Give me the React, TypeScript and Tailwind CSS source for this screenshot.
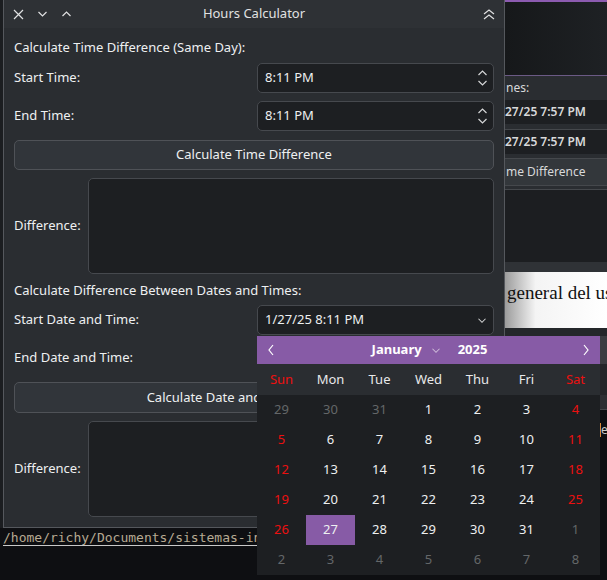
const font = "font-['Noto_Sans',sans-serif]";

const weekDays = ["Sun", "Mon", "Tue", "Wed", "Thu", "Fri", "Sat"];

const weeks = [
  [29, 30, 31, 1, 2, 3, 4],
  [5, 6, 7, 8, 9, 10, 11],
  [12, 13, 14, 15, 16, 17, 18],
  [19, 20, 21, 22, 23, 24, 25],
  [26, 27, 28, 29, 30, 31, 1],
  [2, 3, 4, 5, 6, 7, 8],
];

function isOutside(row: number, day: number) {
  return (row === 0 && day > 20) || (row >= 4 && day < 10);
}

function Chevron({ dir, className }: { dir: "up" | "down" | "left" | "right"; className?: string }) {
  const d = {
    up: "M1 6 L5 2 L9 6",
    down: "M1 2 L5 6 L9 2",
    left: "M6 1 L2 6 L6 11",
    right: "M2 1 L6 6 L2 11",
  }[dir];
  const box = dir === "up" || dir === "down" ? "0 0 10 8" : "0 0 8 12";
  return (
    <svg viewBox={box} className={className} fill="none" stroke="currentColor" strokeWidth="1.2">
      <path d={d} />
    </svg>
  );
}

function SpinInput({ value }: { value: string }) {
  return (
    <div className="flex h-[30px] w-[237px] items-center justify-between rounded-[5px] border border-[#46494e] bg-[#1d1f22] pl-[7px] pr-[5px] text-[#eef0f1]">
      <span>{value}</span>
      <div className="flex flex-col gap-[2px] text-[#d5d6d7]">
        <Chevron dir="up" className="h-[8px] w-[11px]" />
        <Chevron dir="down" className="h-[8px] w-[11px]" />
      </div>
    </div>
  );
}

function ComboInput({ value }: { value: string }) {
  return (
    <div className="flex h-[30px] w-[237px] items-center justify-between rounded-[5px] border border-[#46494e] bg-[#1d1f22] pl-[7px] pr-[6px] text-[#eef0f1]">
      <span>{value}</span>
      <Chevron dir="down" className="h-[7px] w-[10px] text-[#d5d6d7]" />
    </div>
  );
}

function Button({ label, tall }: { label: string; tall?: boolean }) {
  return (
    <div
      className={`flex items-center justify-center rounded-[5px] border border-[#4f5257] bg-[#31353a] text-[#eef0f1] ${tall ? "h-[31px]" : "h-[30px]"}`}
    >
      {label}
    </div>
  );
}

function Row({ label, children }: { label: string; children: React.ReactNode }) {
  return (
    <div className="flex items-center justify-between">
      <span>{label}</span>
      {children}
    </div>
  );
}

function DiffRow() {
  return (
    <div className="flex items-center">
      <span className="w-[74px]">Difference:</span>
      <div className="h-[96px] flex-1 rounded-[5px] border border-[#46494e] bg-[#1d1f22]" />
    </div>
  );
}

function Calendar() {
  return (
    <div className={`absolute left-[257px] top-[336px] w-[343px] bg-[#1d1f22] text-[13px] ${font}`}>
      <div className="flex h-[28px] items-center justify-between bg-[#875ba6] px-[10px] text-white">
        <Chevron dir="left" className="h-[12px] w-[8px]" />
        <div className="flex items-center gap-[9px] pl-[2px] font-bold">
          <span>January</span>
          <Chevron dir="down" className="h-[7px] w-[10px] text-[#cdbad9]" />
          <span className="ml-[8px]">2025</span>
        </div>
        <Chevron dir="right" className="h-[12px] w-[8px]" />
      </div>
      <div className="grid h-[31px] grid-cols-7 items-center bg-[#2a2d31] text-center">
        {weekDays.map((d, i) => (
          <span key={d} className={i === 0 || i === 6 ? "text-[#ec1010]" : "text-[#e8e9ea]"}>
            {d}
          </span>
        ))}
      </div>
      <div className="grid grid-cols-7 text-center">
        {weeks.map((week, r) =>
          week.map((day, c) => {
            const out = isOutside(r, day);
            const selected = r === 4 && day === 27;
            let color = "text-[#eef0f1]";
            if (out) color = "text-[#646769]";
            else if (c === 0 || c === 6) color = "text-[#ec1010]";
            return (
              <div
                key={`${r}-${c}`}
                className={`flex h-[30px] items-center justify-center ${color} ${selected ? "bg-[#875ba6]" : ""}`}
              >
                {day}
              </div>
            );
          })
        )}
      </div>
    </div>
  );
}

function BackgroundApps() {
  return (
    <>
      {/* window to the right */}
      <div className="absolute left-[505px] top-0 h-[76px] w-[102px] border-t-2 border-[#8c5bb0] bg-[linear-gradient(90deg,#16181a,#1e2124)]" />
      <div className={`absolute left-[505px] top-[75px] flex h-[262px] w-[102px] flex-col border-t border-[#6b5a85] bg-[#2a2d31] text-[12px] text-[#d8d9da] ${font}`}>
        <div className="flex h-[24px] items-center pl-[1px]">nes:</div>
        <div className="flex h-[24px] items-center bg-[#1d1f22] font-semibold">27/25 7:57 PM</div>
        <div className="h-[6px] border-b border-[#45484c]" />
        <div className="flex h-[24px] items-center bg-[#1d1f22] font-semibold">27/25 7:57 PM</div>
        <div className="h-[5px] border-b border-[#45484c]" />
        <div className="flex h-[27px] items-center border-b border-[#45484c] bg-[#33373b] pl-[1px]">me Difference</div>
        <div className="h-[4px] border-b border-[#45484c]" />
        <div className="h-[72px] bg-[#1c1e21]" />
        <div className="h-[10px] bg-[#2f3236]" />
        <div className="flex h-[56px] items-start overflow-hidden bg-[linear-gradient(90deg,#9c9c9c,#f4f4f4_30%,#ffffff)] pl-[2px] pt-[7px] font-['Liberation_Serif',serif] text-[19px] text-[#111]">
          <span className="whitespace-nowrap">general del usu</span>
        </div>
        <div className="h-[8px] bg-[#24272a]" />
      </div>
      <div className="absolute left-[600px] top-[336px] h-[28px] w-[7px] bg-[#3a3d41]" />
      <div className="absolute left-[600px] top-[364px] h-[31px] w-[7px] bg-[#232629]" />
      <div className="absolute left-[600px] top-[395px] h-[15px] w-[7px] border-b border-[#45484c] bg-[#2c2f33]" />
      <div className="absolute left-[600px] top-[423px] h-[14px] w-[7px] overflow-hidden border-l border-[#d98a3a] text-[12px] leading-[14px] text-[#c9c9c9]">e</div>
      {/* left strip */}
      <div className="absolute left-0 top-0 h-[528px] w-[3px] bg-[#1b1d20]" />
      {/* terminal */}
      <div className="absolute left-0 top-[528px] h-[52px] w-[607px] bg-[#0e0f12]">
        <div className="w-[257px] overflow-hidden whitespace-nowrap pl-[3px] pt-[1px] font-['DejaVu_Sans_Mono',monospace] text-[13px] leading-[18px] text-[#b7aa92] underline decoration-[#c9c9c9] underline-offset-[3px]">
          /home/richy/Documents/sistemas-info
        </div>
      </div>
    </>
  );
}

export default function App() {
  return (
    <div className="relative h-[580px] w-[607px] overflow-hidden bg-[#0e0f12]">
      <BackgroundApps />

      <div className={`absolute left-[3px] top-0 flex h-[528px] w-[502px] flex-col border border-t-0 border-[#55585d] bg-[#2a2d31] text-[13px] text-[#eef0f1] ${font}`}>
        <div className="grid h-[28px] shrink-0 grid-cols-[1fr_auto_1fr] items-center bg-[#2e3135] px-[9px] text-[#e0e1e2]">
          <div className="flex items-center gap-[13px]">
            <svg viewBox="0 0 11 11" className="h-[11px] w-[11px]" fill="none" stroke="currentColor" strokeWidth="1.2">
              <path d="M1 1 L10 10 M10 1 L1 10" />
            </svg>
            <Chevron dir="down" className="h-[8px] w-[11px]" />
            <Chevron dir="up" className="h-[8px] w-[11px]" />
          </div>
          <span>Hours Calculator</span>
          <div className="flex justify-end">
            <svg viewBox="0 0 12 11" className="h-[11px] w-[12px]" fill="none" stroke="currentColor" strokeWidth="1.2">
              <path d="M1 5 L6 1 L11 5 M1 10 L6 6 L11 10" />
            </svg>
          </div>
        </div>

        <div className="flex flex-col gap-2 pl-[10px] pr-[10px] pt-[10px]">
          <div className="h-[18px] leading-[18px]">Calculate Time Difference (Same Day):</div>
          <div className="-mt-[1px]">
            <Row label="Start Time:">
              <SpinInput value="8:11 PM" />
            </Row>
          </div>
          <Row label="End Time:">
            <SpinInput value="8:11 PM" />
          </Row>
          <div className="mt-[1px]">
            <Button label="Calculate Time Difference" />
          </div>
          <DiffRow />
          <div className="-mt-[1px] h-[18px] leading-[18px]">Calculate Difference Between Dates and Times:</div>
          <div className="-mt-[2px]">
            <Row label="Start Date and Time:">
              <ComboInput value="1/27/25 8:11 PM" />
            </Row>
          </div>
          <Row label="End Date and Time:">
            <ComboInput value="1/27/25 8:11 PM" />
          </Row>
          <div className="mt-[1px]">
            <Button label="Calculate Date and Time Difference" tall />
          </div>
          <DiffRow />
        </div>
      </div>

      <Calendar />
    </div>
  );
}
